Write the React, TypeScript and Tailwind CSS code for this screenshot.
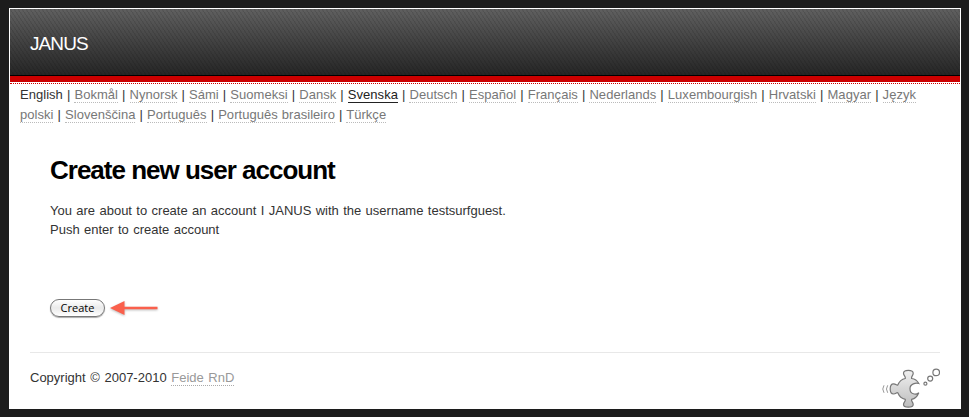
import { Fragment } from "react";

const languages = ["Bokmål", "Nynorsk", "Sámi", "Suomeksi", "Dansk", "Svenska", "Deutsch", "Español", "Français", "Nederlands", "Luxembourgish", "Hrvatski", "Magyar", "Język polski", "Slovenščina", "Português", "Português brasileiro", "Türkçe"];

function Languages() {
  return (
    <nav className="pt-px pr-8 pl-[10px] leading-5 tracking-[0.035px] [word-spacing:0.42px]">
      <span>English</span>
      {languages.map((name) => (
        <Fragment key={name}>
          <span>{" | "}</span>
          <a className={name === "Svenska" ? "border-b border-[#222] text-[#222]" : "border-b border-dotted border-[#bbb] text-[#777]"}>{name}</a>
        </Fragment>
      ))}
    </nav>
  );
}

function Puzzle() {
  return (
    <svg className="mt-[14px] h-[41px] w-[60px] shrink-0" viewBox="880 367 60 41" fill="none" stroke="#777" strokeWidth="1.2">
      <defs>
        <linearGradient id="piece" x1="0" y1="0" x2="0" y2="1">
          <stop offset="0" stopColor="#f0f0f0" />
          <stop offset="1" stopColor="#bdbdbd" />
        </linearGradient>
      </defs>
      <path fill="url(#piece)" stroke="#777" d="M905.3 378.5C905.8 376.3 903.5 375.8 903.5 373.3C903.5 371.2 905.6 370.3 908.3 370.3C911 370.3 913.2 371.2 913.2 373.3C913.2 375.8 911 376.3 911.6 378.5C914.7 378.8 917.3 380.6 918.8 383.5C916 382.7 910 383.5 910 388.7C910 394.5 916 395.1 918.8 392.7C917.3 396.4 914.7 398.7 911.6 399.4C911 401.5 913.2 402 913.2 404.5C913.2 406.5 911 407.2 908.3 407.2C905.6 407.2 903.5 406.5 903.5 404.5C903.5 402 905.8 401.5 905.3 399.4C902 398.6 899.2 396.2 897.9 393C896.9 391.8 896.3 394 893.5 394C891.3 394 890.2 391.8 890.2 389C890.2 386.2 891.3 383.8 893.5 383.8C896.3 383.8 896.9 386.2 897.9 384.8C899.2 381.5 902 379.2 905.3 378.5Z" />
      <path stroke="#999" strokeWidth="1" d="M884 385.3Q881.5 389 884 392.8M887.7 385.3Q885.2 389 887.7 392.8" />
      <circle cx="925.4" cy="383.7" r="1.5" />
      <circle cx="930.2" cy="378.6" r="2.5" />
      <circle cx="936.2" cy="372.4" r="3.3" />
    </svg>
  );
}

export default function App() {
  return (
    <div className="h-[417px] bg-[#1c1c1c] pt-2 pr-2 pl-[9px] font-['Liberation_Sans',Arial,sans-serif] text-[13px] text-[#333]">
      <main className="flex h-[401px] w-[952px] flex-col border border-white bg-white">
        <header className="relative h-[66px] shrink-0 bg-linear-to-b from-[#606060] to-[#262626]">
          <svg className="absolute inset-0 h-full w-full">
            <defs>
              <pattern id="weave" width="4" height="6" patternUnits="userSpaceOnUse">
                <path d="M0.5 0L1.5 3M2.5 3L3.5 6" fill="none" stroke="#000" strokeOpacity=".15" />
              </pattern>
            </defs>
            <rect width="100%" height="100%" fill="url(#weave)" />
          </svg>
          <div className="relative pt-[23px] pl-5 text-[19px] leading-6 tracking-[-0.9px] text-white">JANUS</div>
        </header>
        <div className="h-[7px] shrink-0 border-t border-black bg-[#cc0000]" />
        <div className="mt-px shrink-0 border-t border-dotted border-[#cc0000]" />
        <Languages />
        <section className="px-10 pt-[29px]">
          <h1 className="text-[26px] leading-[32px] font-bold tracking-[-1px] text-black">Create new user account</h1>
          <p className="mt-[15px] leading-[19px] [word-spacing:0.75px]">
            You are about to create an account I JANUS with the username testsurfguest.
            <br />
            Push enter to create account
          </p>
          <div className="mt-[59px] flex items-center">
            <button className="h-[18px] w-[55px] rounded-full border border-[#777] bg-linear-to-b from-white via-[#eaeaea] to-white font-['Open_Sans','Noto_Sans',sans-serif] text-[11px] leading-[16px] font-medium text-black shadow-[0_1px_1px_#aaa]">Create</button>
            <svg className="ml-1 h-[20px] w-[52px] drop-shadow-[0_1px_1px_#bbb]" viewBox="109 298 52 20">
              <path d="M124 308H157.5" stroke="#fa604c" strokeWidth="2.6" />
              <path d="M110 308L124.5 301V315Z" fill="#fa604c" />
            </svg>
          </div>
        </section>
        <footer className="mx-5 mt-auto flex h-[56px] justify-between border-t border-[#e8e8e8]">
          <p className="pt-[15px] leading-5 [word-spacing:1px]">
            Copyright © 2007-2010 <a className="border-b border-dotted border-[#aaa] text-[#999]">Feide RnD</a>
          </p>
          <Puzzle />
        </footer>
      </main>
    </div>
  );
}
